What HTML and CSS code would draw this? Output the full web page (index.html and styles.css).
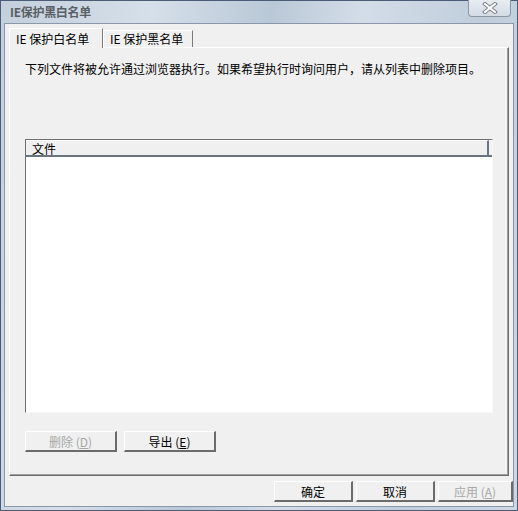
FILE: index.html
```html
<!DOCTYPE html>
<html lang="zh-CN">
  <head>
    <meta charset="UTF-8" />
    <title>IE保护黑白名单</title>
    <link rel="stylesheet" href="styles.css">
  </head>
  <body>
    <div class="window">
      <div class="title-bar">
        <span class="title">IE保护黑白名单</span>
        <button type="button" class="close-btn">
          <svg width="18" height="12" viewBox="0 0 18 12">
            <path d="M4 2 L14 10 M14 2 L4 10" stroke="#7a7f88" stroke-width="4" stroke-linecap="square" fill="none" />
            <path d="M4 2 L14 10 M14 2 L4 10" stroke="#ffffff" stroke-width="2" stroke-linecap="square" fill="none" />
          </svg>
        </button>
      </div>

      <div class="client">
        <div class="tabs">
          <div class="tab active">IE 保护白名单</div>
          <div class="tab">IE 保护黑名单</div>
        </div>

        <div class="panel">
          <p class="desc">下列文件将被允许通过浏览器执行。如果希望执行时询问用户，请从列表中删除项目。</p>

          <div class="list">
            <div class="list-header">
              <div class="col">文件</div>
              <div class="col-rest"></div>
            </div>
            <div class="list-body"></div>
          </div>

          <div class="list-actions">
            <button type="button" class="btn" disabled>删除 (<u>D</u>)</button>
            <button type="button" class="btn">导出 (<u>E</u>)</button>
          </div>
        </div>

        <div class="dialog-actions">
          <button type="button" class="btn small">确定</button>
          <button type="button" class="btn small">取消</button>
          <button type="button" class="btn small" disabled>应用 (<u>A</u>)</button>
        </div>
      </div>
    </div>
  </body>
</html>
```

FILE: styles.css
```css
body {
  margin: 0;
  font-family: "Noto Sans CJK SC", "Liberation Sans", sans-serif;
  font-size: 12px;
  color: #000;
  background-color: #f0f0f0;
}
.window {
  width: 518px;
  height: 511px;
  box-sizing: border-box;
  display: flex;
  flex-direction: column;
  border: 1px solid #4a5c78;
  background: linear-gradient(100deg, #c3cfdc 0%, #d5dfe9 25%, #b9c8d7 45%, #d3dde8 60%, #bfcddb 80%, #cdd8e3 100%);
}

.title-bar {
  height: 22px;
  display: flex;
  justify-content: space-between;
  align-items: flex-start;
  padding-left: 9px;
}
.title-bar .title {
  font-size: 12px;
  font-weight: bold;
  color: #5a5f66;
  line-height: 22px;
  letter-spacing: -0.3px;
}
.close-btn {
  width: 43px;
  height: 17px;
  margin-right: 6px;
  margin-top: -1px;
  padding: 0;
  display: flex;
  align-items: center;
  justify-content: center;
  border: 1px solid #8d97a4;
  border-top: none;
  border-radius: 0 0 4px 4px;
  background: linear-gradient(#e8edf2, #d3dbe4);
}

.client {
  flex: 1;
  margin: 0 3px 3px 3px;
  border: 1px solid #8a97ab;
  background-color: #f0f0f0;
  display: flex;
  flex-direction: column;
  padding: 3px 0 0 4px;
}

.tabs {
  display: flex;
  align-items: flex-end;
  height: 20px;
  position: relative;
  z-index: 1;
}
.tab {
  height: 16px;
  line-height: 16px;
  padding: 0 6px;
  font-size: 12px;
  white-space: nowrap;
  border-left: 1px solid #fff;
  border-right: 1px solid #7a7a7a;
  border-top: 1px solid #fff;
  background-color: #f0f0f0;
}
.tab.active {
  height: 19px;
  line-height: 19px;
  width: 80px;
  margin-bottom: -1px;
}
.tab:not(.active) {
  width: 76px;
}

.panel {
  width: 500px;
  height: 429px;
  box-sizing: border-box;
  border-left: 1px solid #fff;
  border-top: 1px solid #fff;
  border-right: 1px solid #6b6b6b;
  border-bottom: 1px solid #6b6b6b;
  box-shadow: inset -1px -1px 0 #a0a0a0;
  display: flex;
  flex-direction: column;
  padding: 0 15px 23px 15px;
}
.desc {
  margin: 14px 0 0 0;
  line-height: 14px;
  white-space: nowrap;
}

.list {
  flex: 1;
  margin-top: 63px;
  display: flex;
  flex-direction: column;
  border-top: 1px solid #707070;
  border-left: 1px solid #707070;
  border-right: 1px solid #f8f8f8;
  border-bottom: 1px solid #f8f8f8;
  background-color: #fff;
}
.list-header {
  display: flex;
  height: 15px;
  border-bottom: 2px solid #6b7280;
  background-color: #f0f0f0;
}
.list-header .col {
  width: 455px;
  padding-left: 6px;
  line-height: 15px;
  border-right: 2px solid #6b7280;
  border-top: 1px solid #fff;
}
.list-header .col-rest {
  flex: 1;
  border-top: 1px solid #fff;
}
.list-body {
  flex: 1;
}

.list-actions {
  display: flex;
  gap: 7px;
  margin-top: 18px;
}
.btn {
  width: 92px;
  height: 21px;
  padding: 0;
  font-family: inherit;
  font-size: 12px;
  color: #000;
  background-color: #f0f0f0;
  border-top: 1px solid #fff;
  border-left: 1px solid #fff;
  border-right: 2px solid #6b6b6b;
  border-bottom: 2px solid #6b6b6b;
  box-sizing: border-box;
}
.btn:disabled {
  color: #a7a7a7;
}
.btn u {
  text-decoration: underline;
}

.dialog-actions {
  display: flex;
  justify-content: flex-end;
  gap: 3px;
  padding: 5px 0 0 0;
}
.btn.small {
  width: 79px;
  height: 21px;
}
.btn.small:last-child {
  width: 75px;
}
```
